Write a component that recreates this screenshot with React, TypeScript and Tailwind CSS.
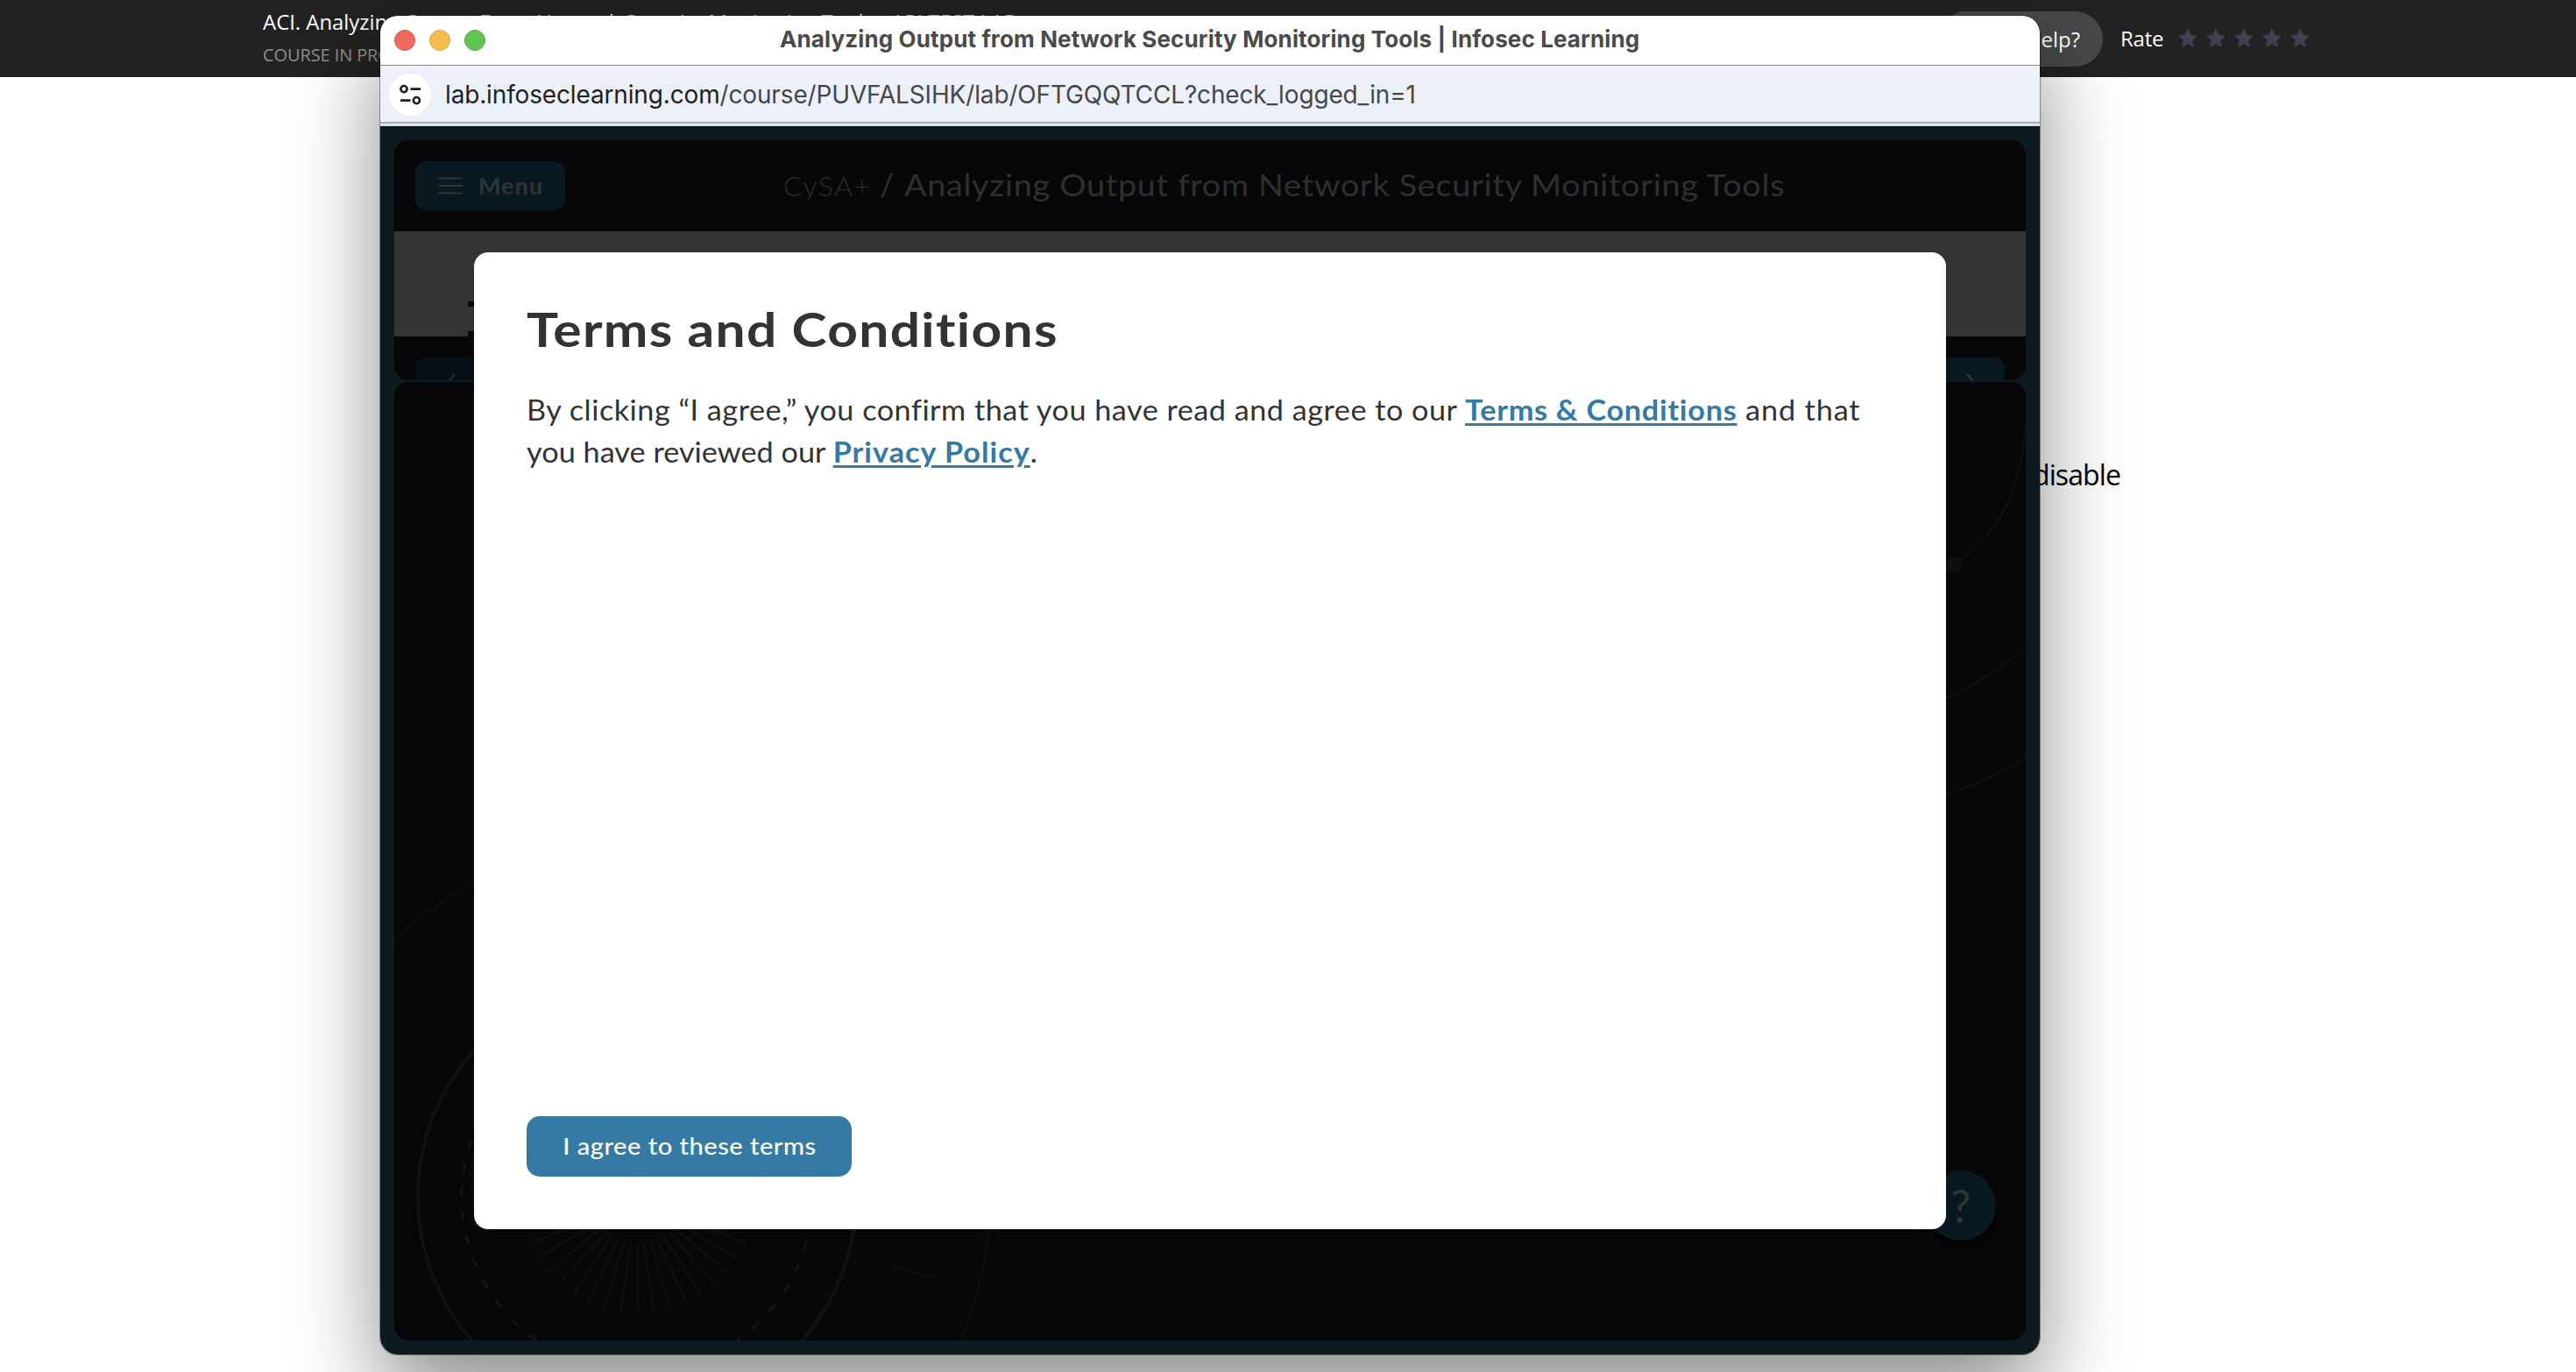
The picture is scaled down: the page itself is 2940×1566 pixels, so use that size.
import React from "react";

const STAR =
  "M12 1.6l3.1 6.5 7.1 1-5.2 5 1.3 7.1L12 17.8l-6.3 3.4L7 14.1l-5.2-5 7.1-1z";

const RAYS = Array.from({ length: 21 }, (_, i) => (i - 10) * 8.3);

function TopBar() {
  return (
    <header className="flex h-[88px] bg-[#222222] font-['Open_Sans',sans-serif] whitespace-nowrap text-white">
      <div className="ml-[300px] w-[1912px] pt-[9px]">
        <div className="text-[24px] leading-[32px] font-medium tracking-[-0.05px]">
          ACI. Analyzing Output From Network Security Monitoring Tools - API TEST LAB
        </div>
        <div className="mt-[6px] text-[20px] leading-[32px] tracking-[-0.1px] text-[#8f8f8f]">
          COURSE IN PROGRESS
        </div>
      </div>
      <button className="mt-[13px] flex h-[63px] w-[188px] items-center justify-end rounded-full bg-[#484848] pr-[26px] text-[24px] font-medium">
        Need help?
      </button>
      <div className="ml-[20px] flex items-center text-[24px] leading-[32px] tracking-[-0.2px]">
        <span className="w-[51px]">Rate</span>
        <div className="ml-[14px] flex gap-[8px]">
          {[0, 1, 2, 3, 4].map((i) => (
            <svg key={i} viewBox="0 0 24 24" className="h-6 w-6 fill-[#414052] stroke-[#414052] stroke-[1]" strokeLinejoin="round">
              <path d={STAR} />
            </svg>
          ))}
        </div>
      </div>
    </header>
  );
}

function TitleBar() {
  return (
    <div className="flex h-[57px] shrink-0 items-center border-b border-[#8c8c8c] bg-white pl-[16px]">
      <div className="flex gap-[16px]">
        <span className="h-[24px] w-[24px] rounded-full border border-[#d6574c] bg-[#ec6a5e]" />
        <span className="h-[24px] w-[24px] rounded-full border border-[#d9a341] bg-[#f4bf4f]" />
        <span className="h-[24px] w-[24px] rounded-full border border-[#4dab3d] bg-[#61c554]" />
      </div>
      <div className="ml-[336px] pb-[3px] font-['Inter',sans-serif] text-[26px] leading-[32px] font-bold tracking-[0.12px] whitespace-nowrap text-[#4a4a4a]">
        Analyzing Output from Network Security Monitoring Tools | Infosec Learning
      </div>
    </div>
  );
}

function AddressBar() {
  return (
    <div className="flex h-[69px] shrink-0 flex-col">
      <div className="flex h-[64px] items-center bg-[#ecf0f9] pl-[10px]">
        <span className="mt-[2px] flex h-[48px] w-[48px] items-center justify-center rounded-full bg-white">
          <svg viewBox="0 0 26 24" className="h-[24px] w-[26px]" fill="none" stroke="#1f1f1f" strokeWidth="2.6">
            <circle cx="6" cy="5.6" r="3.6" />
            <path d="M13.5 5.6H25M2 18.6h11.5" />
            <circle cx="20.4" cy="18.6" r="3.6" />
          </svg>
        </span>
        <div className="mt-[2px] ml-[16px] font-['Inter',sans-serif] text-[28px] leading-[36px] tracking-[-0.15px] whitespace-nowrap text-[#474747]">
          <span className="text-[#1f1f1f]">lab.infoseclearning.com</span>
          /course/PUVFALSIHK/lab/OFTGQQTCCL?check_logged_in=1
        </div>
      </div>
      <div className="h-[2px] bg-[#acacb4]" />
      <div className="h-[3px] bg-[#e2e2e2]" />
    </div>
  );
}

function CoursePanel() {
  return (
    <section className="flex h-[274px] shrink-0 flex-col overflow-hidden rounded-[16px] bg-[#070709] whitespace-nowrap">
      <div className="flex h-[104px] shrink-0 items-center pl-[24px]">
        <button className="flex h-[56px] w-[171px] items-center rounded-[12px] bg-[#091922] pl-[26px] text-[27px] font-bold tracking-[1px] text-[#333333]">
          <svg viewBox="0 0 28 20" className="mr-[18px] h-[20px] w-[28px]" fill="none" stroke="#333333" strokeWidth="2" strokeLinecap="round">
            <path d="M1 1.5h26M1 10h26M1 18.5h26" />
          </svg>
          Menu
        </button>
        <div className="ml-[249px] flex items-baseline pb-[2px] leading-[44px] text-[#2f2f2f]">
          <span className="w-[110px] text-[32px] font-light tracking-[1.5px] text-[#2b2b2b]">CySA+</span>
          <span className="w-[28px] text-[36px]">/</span>
          <span className="inline-block origin-left scale-x-[1.08] text-[35px] tracking-[0.64px]">
            Analyzing Output from Network Security Monitoring Tools
          </span>
        </div>
      </div>
      <div className="flex h-[120px] shrink-0 items-end bg-[#333333] pl-[84px]">
        <div className="flex h-[40px] w-[20px] flex-col justify-between">
          <span className="h-[6px] bg-[#070709]" />
          <span className="h-[6px] bg-[#070709]" />
        </div>
      </div>
      <div className="flex shrink-0 justify-between px-[24px] pt-[24px]">
        <span className="h-[56px] w-[120px] rounded-[12px] bg-[#080e16] pt-[18px] pl-[34px]">
          <svg viewBox="0 0 12 20" className="h-[20px] w-[12px]" fill="none" stroke="#2b2b2b" strokeWidth="2">
            <path d="M11 1L3 10l8 9" />
          </svg>
        </span>
        <span className="flex h-[56px] w-[120px] justify-end rounded-[12px] bg-[#091922] pt-[18px] pr-[33px]">
          <svg viewBox="0 0 12 20" className="h-[20px] w-[12px]" fill="none" stroke="#3a3a3a" strokeWidth="2">
            <path d="M2 1l8 9-8 9" />
          </svg>
        </span>
      </div>
    </section>
  );
}

function ScenePanel() {
  return (
    <section className="mt-[2px] h-[1094px] shrink-0 overflow-hidden rounded-[16px] bg-[#070709]">
      <svg viewBox="450 436 1862 1094" className="h-[1094px] w-[1862px]" fill="none">
        <circle cx="727" cy="1366" r="250" stroke="#13100d" strokeWidth="4" />
        <circle cx="727" cy="1366" r="200" stroke="#131315" strokeWidth="3" strokeDasharray="11.5 16.05" strokeDashoffset="5.5" />
        <circle cx="727" cy="1366" r="403.5" stroke="#0e0e0d" strokeWidth="2" />
        {RAYS.map((a) => (
          <path key={a} d="M727.5 1421V1500" transform={`rotate(${a} 727.5 1366)`} stroke="#0d0d0e" strokeWidth="3.5" />
        ))}
        <path d="M1018.6 1446L1065 1457.5" stroke="#101013" strokeWidth="2" />
        <path d="M2312 486Q2302 596 2236 641" stroke="#0f0f0c" strokeWidth="2.5" />
        <circle cx="2230" cy="646" r="10" fill="#0f0f0c" />
        <path d="M2221 797Q2270 775 2312 738" stroke="#0f0f0c" strokeWidth="2.5" />
        <path d="M2221 908Q2270 890 2312 865.6" stroke="#0f0f0c" strokeWidth="2.5" />
      </svg>
    </section>
  );
}

function TermsModal() {
  const link = "font-bold text-[#357aa5] underline decoration-[3px] underline-offset-[3px]";
  return (
    <div className="absolute top-[270px] left-[107px] flex h-[1115px] w-[1680px] flex-col items-start rounded-[16px] bg-white px-[60px] pt-[56px] pb-[60px] whitespace-nowrap text-[#333333]">
      <h1 className="origin-left scale-x-[1.12] text-[54px] leading-[64px] font-bold tracking-[1.16px]">
        Terms and Conditions
      </h1>
      <p className="mt-[36px] origin-left scale-x-[1.07] text-[32px] leading-[48px]">
        <span className="tracking-[0.46px]">By clicking “I agree,” you confirm that you have read and agree to our </span>
        <a className={`${link} tracking-[0.67px]`}>Terms &amp; Conditions</a>
        <span className="tracking-[0.8px]"> and that</span>
        <br />
        <span className="tracking-[0.02px]">you have reviewed our </span>
        <a className={`${link} tracking-[0.92px]`}>Privacy Policy</a>.
      </p>
      <button className="mt-auto flex h-[69px] w-[371px] items-center justify-center rounded-[15px] bg-[#357aa5] pb-[1px] text-[27px] font-medium tracking-[0.42px] text-white">
        <span className="scale-x-[1.08]">I agree to these terms</span>
      </button>
    </div>
  );
}

function BrowserWindow() {
  return (
    <div className="absolute top-[18px] left-[434px] h-[1528px] w-[1894px] rounded-[20px] shadow-[0_0_0_1px_rgba(0,0,0,0.35),0_44px_100px_rgba(0,0,0,0.46)]">
      <div className="relative flex h-full flex-col overflow-hidden rounded-[20px] bg-[#0d1a20] font-['Lato',sans-serif]">
        <TitleBar />
        <AddressBar />
        <div className="flex flex-col px-[16px] pt-[16px]">
          <CoursePanel />
          <ScenePanel />
        </div>
        <span className="absolute top-[1318px] left-[1764px] flex h-[80px] w-[80px] items-center justify-center rounded-full bg-[#091922] text-[52px] leading-none text-[#333333] shadow-[0_6px_14px_rgba(0,0,0,0.6)]">
          ?
        </span>
        <TermsModal />
      </div>
    </div>
  );
}

export default function App() {
  return (
    <div className="relative h-[1566px] w-[2940px] overflow-hidden bg-white">
      <TopBar />
      <p className="mt-[429px] w-[2420px] text-right font-['Open_Sans',sans-serif] text-[32px] leading-[50px] font-medium tracking-[-0.9px] text-black">
        disable
      </p>
      <BrowserWindow />
    </div>
  );
}
